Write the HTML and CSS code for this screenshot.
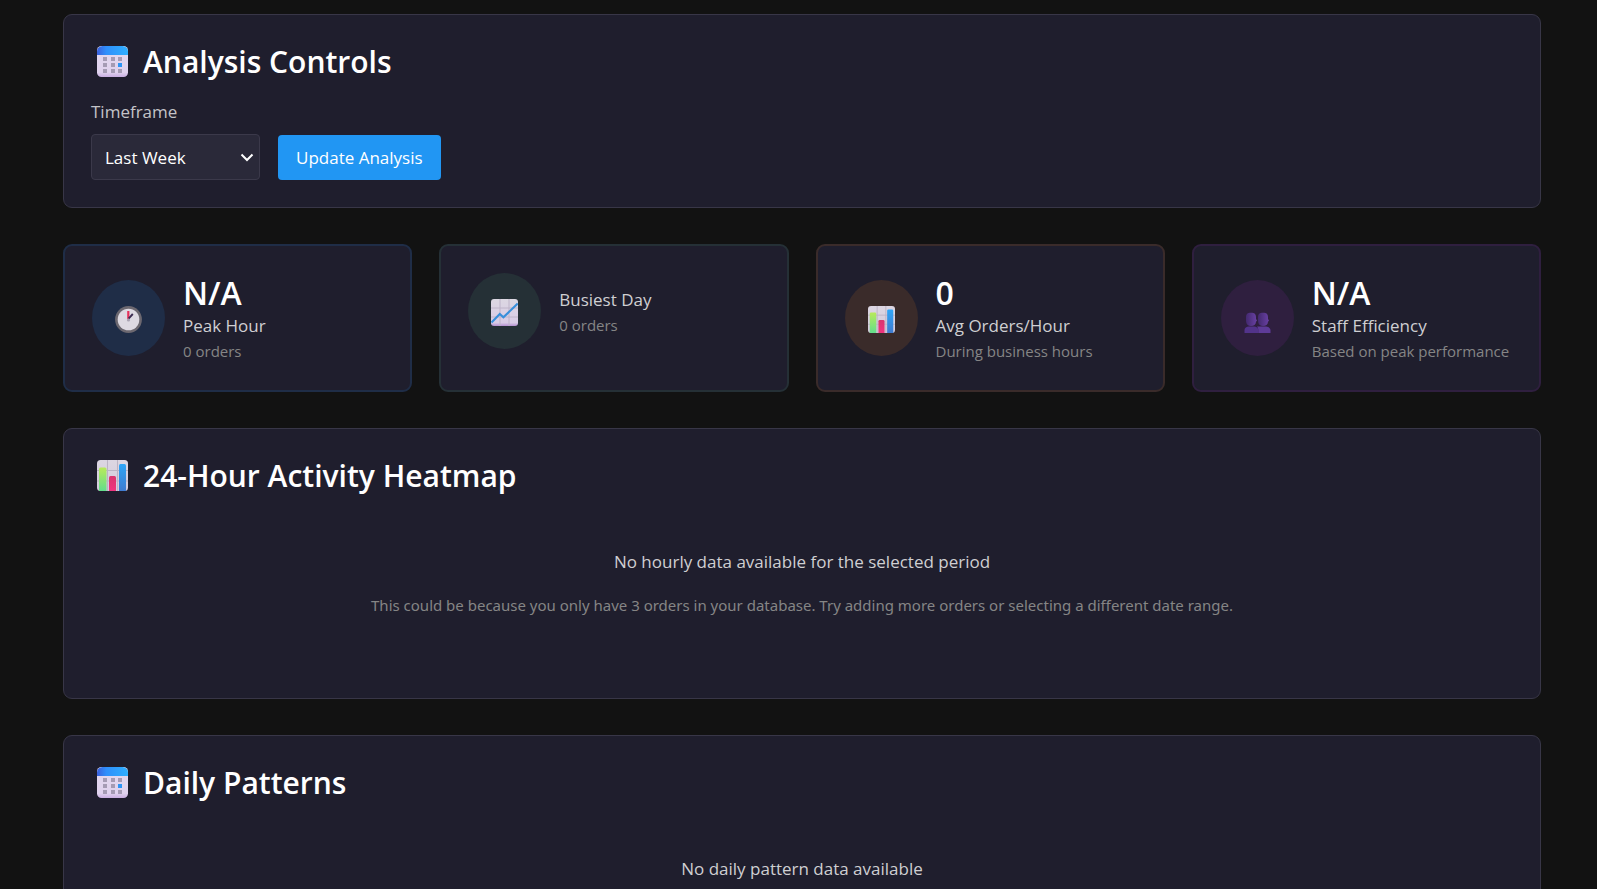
FILE: index.html
```html
<!DOCTYPE html>
<html lang="en">
<head>
<meta charset="utf-8">
<meta name="viewport" content="width=device-width, initial-scale=1">
<title>Peak Hours Analysis</title>
<link rel="stylesheet" href="styles.css">
</head>
<body>
<svg class="defs" aria-hidden="true">
  <defs>
    <linearGradient id="cal-top" x1="0" y1="0" x2="1" y2="0"><stop offset="0" stop-color="#3a5fdc"/><stop offset=".3" stop-color="#2f8ffb"/><stop offset="1" stop-color="#2fb0ff"/></linearGradient>
    <linearGradient id="cal-body" x1="0" y1="0" x2="0" y2="1"><stop offset="0" stop-color="#e2d9ee"/><stop offset=".85" stop-color="#e0d2ee"/><stop offset="1" stop-color="#c9aee2"/></linearGradient>
    <linearGradient id="paper" x1="0" y1="0" x2="0" y2="1"><stop offset="0" stop-color="#dcd7e2"/><stop offset=".88" stop-color="#d8cbe6"/><stop offset="1" stop-color="#b48fd0"/></linearGradient>
    <linearGradient id="sheet" x1="0" y1="0" x2="0" y2="1"><stop offset="0" stop-color="#dcd6e2"/><stop offset="1" stop-color="#d3cbdc"/></linearGradient>
    <linearGradient id="green" x1="0" y1="0" x2="0" y2="1"><stop offset="0" stop-color="#b9ea5a"/><stop offset="1" stop-color="#62dd8c"/></linearGradient>
    <linearGradient id="pink" x1="0" y1="0" x2="0" y2="1"><stop offset="0" stop-color="#d9356f"/><stop offset="1" stop-color="#f0347f"/></linearGradient>
    <linearGradient id="blue" x1="0" y1="0" x2="0" y2="1"><stop offset="0" stop-color="#2fa6f7"/><stop offset="1" stop-color="#3f7bd0"/></linearGradient>
    <linearGradient id="person" x1="0" y1="0" x2="1" y2="0"><stop offset="0" stop-color="#43296f"/><stop offset="1" stop-color="#6a41a5"/></linearGradient>
    <symbol id="calendar" viewBox="0 0 31 31">
      <rect width="31" height="31" rx="4.5" fill="url(#cal-body)"/>
      <path d="M0 9V5.500A5.500 5.500 0 0 1 5.500 0H25.500A5.500 5.500 0 0 1 31 5.500V9Z" fill="url(#cal-top)"/>
      <g fill="#a59bb4"><path d="M6 11h4v4H6zM14 11h4v4h-4zM21 11h4v4h-4zM6 17h4v4H6zM14 17h4v4h-4zM6 23h4v4H6zM14 23h4v4h-4zM21 23h4v4h-4z"/></g>
      <path d="M21 17h4v4h-4z" fill="#2d95f5"/>
    </symbol>
    <symbol id="bars" viewBox="0 0 31 31">
      <rect width="31" height="31" rx="3.500" fill="url(#sheet)"/>
      <path d="M10.500 0V31M20.500 0V31M0 10.500H31M0 21H31" stroke="#bbb3c4" fill="none"/>
      <path d="M2 31V9a1.500 1.500 0 0 1 1.500-1.500h4.500A1.500 1.500 0 0 1 9.500 9V31Z" fill="url(#green)"/>
      <path d="M12 31V17.500a1.500 1.500 0 0 1 1.500-1.500h4a1.500 1.500 0 0 1 1.500 1.500V31Z" fill="url(#pink)"/>
      <path d="M22 31V5.500A1.500 1.500 0 0 1 23.500 4h4A1.500 1.500 0 0 1 29 5.500V31Z" fill="url(#blue)"/>
    </symbol>
    <symbol id="trend" viewBox="0 0 27 27">
      <rect width="27" height="27" rx="3" fill="url(#paper)"/>
      <path d="M9 0V27M18 0V27M0 9H27M0 18H27" stroke="#beb4c9" fill="none"/>
      <path d="M.5 23.500 8.800 15l3.600 3.300L26.700 4.500" stroke="#378fdb" stroke-width="2.100" fill="none"/>
    </symbol>
    <symbol id="clock" viewBox="0 0 27 27">
      <circle cx="13.500" cy="13.500" r="13.400" fill="#6c6870"/>
      <circle cx="13.500" cy="13.500" r="10.800" fill="#dedae2"/>
      <path d="M12.200 5h2.200v8h-2.200z" fill="#e5325c"/>
      <path d="M13.600 12.600 17.800 8" stroke="#3a2b50" stroke-width="1.900"/>
      <circle cx="13.500" cy="14" r="1.600" fill="#a9a3b2"/>
    </symbol>
    <symbol id="people" viewBox="0 0 27 27">
      <path d="M.5 27V24c0-2.200 2-3.600 4.500-3.600H10c2.300 0 4.300 1.200 4.300 3.600v3Z" fill="#52338a"/>
      <path d="M14.300 27V24c0-2-.8-3-1.500-3.300.7-.3 1.400-.3 2-.3h6c3.500 0 5.700 1.600 5.700 3.800V27Z" fill="#5e3b98"/>
      <path d="M2 11.500C2 8 3.500 6.800 7 6.800s5 1.200 5 4.700v1.500l1 1.500-1 1.200C11.700 18.700 10 20 7 20s-4.800-1.500-5-5Z" fill="url(#person)"/>
      <path d="M14 11.500c0-3.500 1.500-4.700 5-4.700s5 1.200 5 4.700v1.500l1 1.500-1 1.200c-.3 3-2 4.300-5 4.300s-4.800-1.500-5-5Z" fill="url(#person)"/>
    </symbol>
  </defs>
</svg>

<main class="page">
  <section class="panel">
    <h2 class="panel-title"><svg class="title-icon" aria-hidden="true"><use href="#calendar"/></svg>Analysis Controls</h2>
    <form class="controls">
      <div class="field">
        <label for="timeframe">Timeframe</label>
        <div class="select-wrap">
          <select id="timeframe">
            <option>Last Week</option>
            <option>Last Month</option>
          </select>
          <svg class="chevron" viewBox="0 0 14 9" aria-hidden="true"><path d="M1.500 1.500 7 7l5.500-5.500"/></svg>
        </div>
      </div>
      <button class="update" type="button">Update Analysis</button>
    </form>
  </section>

  <section class="stats">
    <article class="stat stat-blue">
      <div class="stat-row">
        <div class="stat-badge"><svg class="stat-icon" aria-hidden="true"><use href="#clock"/></svg></div>
        <div><div class="value">N/A</div><div class="label">Peak Hour</div><div class="note">0 orders</div></div>
      </div>
    </article>
    <article class="stat stat-green">
      <div class="stat-row">
        <div class="stat-badge"><svg class="stat-icon" aria-hidden="true"><use href="#trend"/></svg></div>
        <div><div class="label">Busiest Day</div><div class="note">0 orders</div></div>
      </div>
    </article>
    <article class="stat stat-orange">
      <div class="stat-row">
        <div class="stat-badge"><svg class="stat-icon" aria-hidden="true"><use href="#bars"/></svg></div>
        <div><div class="value">0</div><div class="label">Avg Orders/Hour</div><div class="note">During business hours</div></div>
      </div>
    </article>
    <article class="stat stat-purple">
      <div class="stat-row">
        <div class="stat-badge"><svg class="stat-icon" aria-hidden="true"><use href="#people"/></svg></div>
        <div><div class="value">N/A</div><div class="label">Staff Efficiency</div><div class="note">Based on peak performance</div></div>
      </div>
    </article>
  </section>

  <section class="panel">
    <h2 class="panel-title"><svg class="title-icon" aria-hidden="true"><use href="#bars"/></svg>24-Hour Activity Heatmap</h2>
    <div class="empty">
      <p class="empty-main">No hourly data available for the selected period</p>
      <p class="empty-note">This could be because you only have 3 orders in your database. Try adding more orders or selecting a different date range.</p>
    </div>
  </section>

  <section class="panel">
    <h2 class="panel-title"><svg class="title-icon" aria-hidden="true"><use href="#calendar"/></svg>Daily Patterns</h2>
    <div class="empty">
      <p class="empty-main">No daily pattern data available</p>
    </div>
  </section>
</main>
</body>
</html>
```

FILE: styles.css
```css
* { box-sizing: border-box; }

html { overflow: hidden; }

body {
  margin: 0;
  background: #121212;
  color: #fff;
  font: 17px/27px "Open Sans", "Noto Sans", sans-serif;
}

h2, p { margin: 0; }

.defs { position: absolute; width: 0; height: 0; }

.page {
  display: flex;
  flex-direction: column;
  gap: 36px;
  padding: 14px 56px 36px 63px;
}

.panel {
  padding: 27px;
  background: #1f1e2d;
  border: 1px solid #383647;
  border-radius: 9px;
}

.panel-title {
  display: flex;
  align-items: center;
  gap: 9px;
  margin-bottom: 16px;
  font-size: 30px;
  font-weight: 600;
  line-height: 40px;
}

.title-icon { width: 31px; height: 31px; margin: 0 6px 2px; }

.controls { display: flex; align-items: flex-end; gap: 18px; }

.field { display: flex; flex-direction: column; gap: 9px; color: #c4c4c8; }

.select-wrap { position: relative; width: 169px; }

select {
  display: block;
  width: 100%;
  height: 46px;
  padding: 0 13px;
  appearance: none;
  background: #2a2939;
  border: 1px solid #3b394a;
  border-radius: 4px;
  color: #fff;
  font: inherit;
}

.chevron {
  position: absolute;
  right: 6px;
  top: 19px;
  width: 14px;
  height: 9px;
  fill: none;
  stroke: #fff;
  stroke-width: 2;
  pointer-events: none;
}

.update {
  height: 45px;
  padding: 0 18px;
  background: #2196f3;
  border: 0;
  border-radius: 4px;
  color: #fff;
  font: inherit;
}

.stats { display: grid; grid-template-columns: repeat(4, 1fr); gap: 27px; }

.stat {
  padding: 27px;
  background: #1f1e2d;
  border: 2px solid var(--tint);
  border-radius: 9px;
}

.stat-blue { --tint: #1f2d47; }
.stat-green { --tint: #253036; }
.stat-orange { --tint: #3a2b2a; }
.stat-purple { --tint: #2f1f3f; }

.stat-row { display: flex; align-items: center; gap: 18px; }

.stat-badge {
  display: grid;
  place-items: center;
  flex: none;
  width: 73px;
  height: 76px;
  padding-top: 3px;
  border-radius: 50%;
  background: var(--tint);
}

.stat-icon { width: 27px; height: 27px; }

.value { font-size: 32px; font-weight: 600; line-height: 39px; }
.label { color: #cfcfd2; line-height: 28px; white-space: nowrap; }
.note { color: #858585; font-size: 15px; line-height: 23px; white-space: nowrap; }

.empty { padding: 36px 36px 54px; text-align: center; }
.empty-main { color: #cfcfd2; }
.empty-note {
  margin-top: 18px;
  color: #858585;
  font-family: "Noto Sans", "Open Sans", sans-serif;
  font-size: 15px;
  line-height: 24px;
}
```
